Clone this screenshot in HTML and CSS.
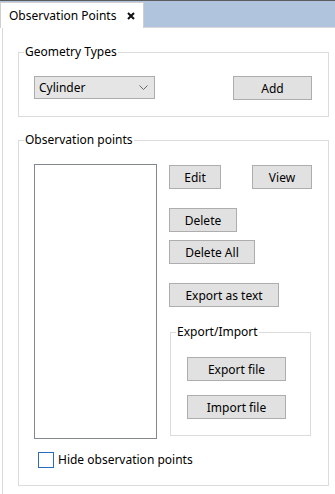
FILE: index.html
```html
<!DOCTYPE html>
<html lang="en">
<head>
  <meta charset="UTF-8" />
  <title>Observation Points</title>
  <link rel="stylesheet" href="styles.css">
</head>
<body>
  <!-- Tab strip -->
  <div class="tabbar">
    <div class="tab">
      <span class="tab-title">Observation Points</span>
      <svg class="tab-close" width="8" height="8" viewBox="0 0 8 8">
        <path d="M1 1 L7 7 M7 1 L1 7" stroke="#111" stroke-width="2"/>
      </svg>
    </div>
  </div>

  <div class="panel">
    <!-- Geometry types -->
    <section class="group geo">
      <div class="group-title">Geometry Types</div>
      <div class="geo-row">
        <div class="combo">
          <span>Cylinder</span>
          <svg width="9" height="6" viewBox="0 0 9 6">
            <path d="M0.5 0.5 L4.5 4.5 L8.5 0.5" fill="none" stroke="#666" stroke-width="1"/>
          </svg>
        </div>
        <button class="btn btn-add">Add</button>
      </div>
    </section>

    <!-- Observation points -->
    <section class="group points">
      <div class="group-title">Observation points</div>
      <div class="points-row">
        <div class="listbox"></div>
        <div class="actions">
          <div class="edit-row">
            <button class="btn btn-edit">Edit</button>
            <button class="btn btn-view">View</button>
          </div>
          <button class="btn btn-delete">Delete</button>
          <button class="btn btn-delete-all">Delete All</button>
          <button class="btn btn-export-text">Export as text</button>

          <section class="group io">
            <div class="group-title">Export/Import</div>
            <button class="btn btn-file btn-export">Export file</button>
            <button class="btn btn-file btn-import">Import file</button>
          </section>
        </div>
      </div>
      <label class="check">
        <span class="check-box"></span>
        <span>Hide observation points</span>
      </label>
    </section>
  </div>
</body>
</html>
```

FILE: styles.css
```css
* {
  box-sizing: border-box;
}

body {
  margin: 0;
  width: 335px;
  height: 494px;
  overflow: hidden;
  background: #fff;
  color: #000;
  font-family: "Noto Sans", "Open Sans", sans-serif;
  font-size: 12px;
}

/* tab strip */
.tabbar {
  display: flex;
  height: 28px;
  background: #b0c4de;
  border-top: 1px solid #5b5b5b;
  border-bottom: 1px solid #dadada;
}

.tab {
  display: flex;
  align-items: center;
  width: 144px;
  height: 26px;
  margin-top: 1px;
  padding-left: 8px;
  background: #fff;
  border: 1px solid #cfcfcf;
  border-bottom: none;
  align-self: flex-start;
}

.tab-title {
  line-height: 16px;
}

.tab-close {
  margin-left: 11px;
}

/* panel */
.panel {
  height: 466px;
  margin-left: 2px;
  padding: 24px 0 0 15px;
  border-left: 1px solid #d9d9d9;
}

/* group boxes: title sits on the top border */
.group {
  border: 1px solid #dcdcdc;
}

.group-title {
  display: table;
  margin: -9px 0 0 -10px;
  padding: 0 1px;
  line-height: 16px;
  background: #fff;
}

.geo {
  width: 311px;
  padding: 0 16px 16px 15px;
}

.geo-row {
  display: flex;
  justify-content: space-between;
  align-items: flex-start;
  margin-top: 16px;
}

.combo {
  display: flex;
  align-items: center;
  justify-content: space-between;
  width: 121px;
  height: 23px;
  padding: 0 6px 0 4px;
  background: #e5e5e5;
  border: 1px solid #acacac;
}

.btn {
  display: block;
  height: 24px;
  padding: 0;
  background: #e1e1e1;
  border: 1px solid #adadad;
  font-family: inherit;
  font-size: 12px;
  color: #000;
}

.btn-add {
  width: 79px;
}

.points {
  width: 311px;
  margin-top: 23px;
  padding: 0 16px 17px 15px;
}

.points-row {
  display: flex;
  gap: 12px;
  margin-top: 16px;
}

.listbox {
  width: 123px;
  height: 275px;
  border: 1px solid #828790;
  background: #fff;
}

.actions {
  width: 143px;
  padding-top: 1px;
}

.edit-row {
  display: flex;
  justify-content: space-between;
}

.btn-edit {
  width: 52px;
}

.btn-view {
  width: 60px;
}

.btn-delete {
  width: 68px;
  margin-top: 19px;
}

.btn-delete-all {
  width: 86px;
  margin-top: 8px;
}

.btn-export-text {
  width: 110px;
  margin-top: 19px;
}

.io {
  width: 141px;
  margin: 25px 0 0 1px;
  padding: 0 16px 16px 16px;
}

.io .group-title {
  margin-left: -11px;
}

.btn-file {
  width: 99px;
}

.btn-export {
  margin-top: 17px;
}

.btn-import {
  margin-top: 14px;
}

.check {
  display: flex;
  align-items: center;
  gap: 4px;
  margin: 13px 0 0 4px;
  line-height: 16px;
}

.check-box {
  width: 16px;
  height: 16px;
  border: 1px solid #2a6cb8;
  background: #fff;
}
```
